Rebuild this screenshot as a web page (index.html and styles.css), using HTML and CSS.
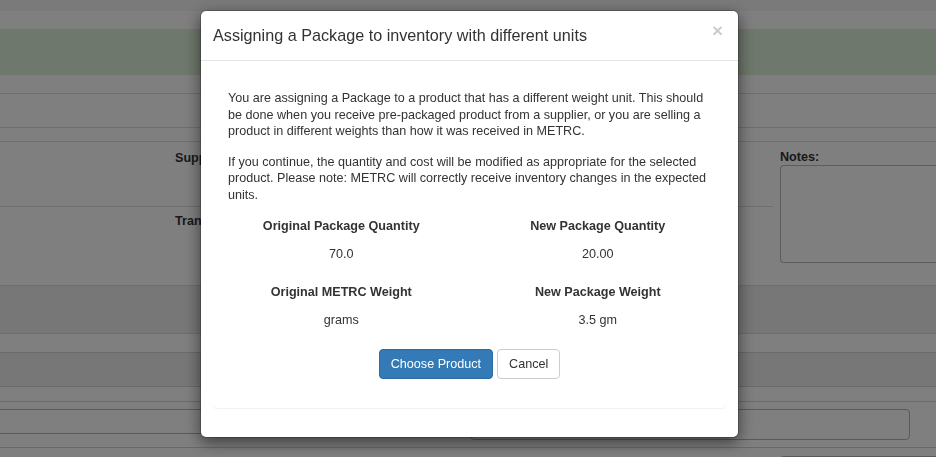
FILE: index.html
```html
<!DOCTYPE html>
<html lang="en">
<head>
<meta charset="utf-8">
<title>Assigning a Package</title>
<link rel="stylesheet" href="styles.css">
</head>
<body>
<div class="page">
  <div class="topbar"></div>
  <div class="spacer-a"></div>
  <div class="alert"></div>
  <div class="spacer-b"></div>
  <div class="band band-1"></div>
  <div class="band band-2"></div>
  <div class="form-area">
    <div class="form-left">
      <div class="form-row first"><span class="lbl">Supplier:</span></div>
      <div class="form-row"><span class="lbl">Transfer:</span></div>
    </div>
    <div class="form-right">
      <span class="lbl">Notes:</span>
      <div class="textarea"></div>
    </div>
  </div>
  <div class="band band-3"></div>
  <div class="band band-4"></div>
  <div class="band band-5"></div>
  <div class="band band-6"></div>
  <div class="input-row">
    <div class="input input-left"></div>
    <div class="input input-right"></div>
  </div>
  <div class="band band-7"></div>
  <div class="bottom-row"><div class="input input-bottom"></div></div>
</div>

<div class="backdrop"></div>

<div class="modal">
  <div class="modal-header">
    <h4 class="modal-title">Assigning a Package to inventory with different units</h4>
    <span class="close">&times;</span>
  </div>
  <div class="modal-body">
    <div class="panel">
      <p>You are assigning a Package to a product that has a different weight unit. This should be done when you receive pre-packaged product from a supplier, or you are selling a product in different weights than how it was received in METRC.</p>
      <p>If you continue, the quantity and cost will be modified as appropriate for the selected product. Please note: METRC will correctly receive inventory changes in the expected units.</p>
      <div class="stats">
        <div class="stat">
          <div class="stat-label">Original Package Quantity</div>
          <div class="stat-value">70.0</div>
        </div>
        <div class="stat">
          <div class="stat-label">New Package Quantity</div>
          <div class="stat-value">20.00</div>
        </div>
        <div class="stat">
          <div class="stat-label">Original METRC Weight</div>
          <div class="stat-value">grams</div>
        </div>
        <div class="stat">
          <div class="stat-label">New Package Weight</div>
          <div class="stat-value">3.5 gm</div>
        </div>
      </div>
      <div class="actions">
        <button class="btn btn-primary" type="button">Choose Product</button>
        <button class="btn btn-default" type="button">Cancel</button>
      </div>
    </div>
  </div>
</div>
</body>
</html>
```

FILE: styles.css
```css
* { box-sizing: border-box; }
html, body { margin: 0; padding: 0; }
body {
  font-family: "Liberation Sans", Arial, sans-serif;
  font-size: 12.6px;
  color: #333;
  background: #fff;
  width: 936px;
  height: 457px;
  overflow: hidden;
}

/* background page */
.page { width: 936px; }
.topbar { height: 11px; background: #f4f4f4; }
.spacer-a { height: 18px; }
.alert { height: 46px; background: #dff0d8; }
.spacer-b { height: 18px; }
.band { border-top: 1px solid #dcdcdc; }
.band-1 { height: 34px; }
.band-2 { height: 14px; background: #fefefe; }
.form-area {
  border-top: 1px solid #dcdcdc;
  height: 144px;
  display: flex;
}
.form-left { width: 773px; }
.form-row { height: 65px; padding: 9px 0 0 175px; }
.form-row.first { border-bottom: 1px solid #dcdcdc; }
.form-row + .form-row { height: 78px; padding-top: 7px; }
.lbl { font-weight: bold; font-size: 12.6px; color: #333; }
.form-right { padding: 8px 0 0 7px; flex: 1; }
.textarea {
  margin-top: 1px;
  height: 98px;
  border: 1px solid #bbb;
  border-right: none;
  border-radius: 4px 0 0 4px;
}
.band-3 { height: 49px; background: #eee; border-bottom: 1px solid #dcdcdc; }
.band-4 { height: 18px; border-top: none; }
.band-5 { height: 35px; background: #eee; border-top: 1px solid #d4d4d4; border-bottom: 1px solid #d4d4d4; }
.band-6 { height: 15px; border-top: none; border-bottom: 1px solid #d4d4d4; }
.input-row { height: 45px; padding-top: 7px; display: flex; }
.input {
  border: 1px solid #b4b4b4;
  border-radius: 4px;
}
.input-left { width: 480px; height: 25px; margin-left: -10px; border-left: none; border-radius: 0 4px 4px 0; }
.input-right { width: 440px; height: 31px; margin-left: 0; }
.band-7 { height: 9px; border-top: 1px solid #d0d0d0; }
.bottom-row { padding-left: 780px; }
.input-bottom { height: 20px; border-bottom: none; border-radius: 4px 0 0 0; }

/* overlay */
.backdrop {
  position: fixed;
  inset: 0;
  background: rgba(0, 0, 0, 0.5);
}

.modal {
  position: fixed;
  top: 10px;
  left: 200px;
  width: 539px;
  background: #fff;
  border-radius: 6px;
  border: 1px solid rgba(0, 0, 0, 0.2);
  box-shadow: 0 5px 15px rgba(0, 0, 0, 0.5);
  background-clip: padding-box;
}
.modal-header {
  position: relative;
  padding: 14px 15px 15px 12px;
  border-bottom: 1px solid #e5e5e5;
}
.modal-title {
  margin: 0;
  font-size: 16.2px;
  font-weight: normal;
  line-height: 20px;
  color: #333;
}
.close {
  position: absolute;
  right: 15px;
  top: 10px;
  font-size: 19px;
  font-weight: bold;
  line-height: 1;
  color: #000;
  opacity: 0.2;
}
.modal-body { padding: 14px 12px 29px; }
.panel {
  border-radius: 4px;
  box-shadow: 0 1px 1px rgba(0, 0, 0, 0.06);
  padding: 15px 15px 29px;
}
.panel p {
  margin: 0 0 14px;
  line-height: 16.5px;
  font-size: 12.6px;
}
.stats {
  display: grid;
  grid-template-columns: 1fr 1fr;
  margin: 15px -15px 0;
  row-gap: 22px;
}
.stat { text-align: center; }
.stat-label { font-weight: bold; font-size: 12.6px; line-height: 16px; color: #333; }
.stat-value { margin-top: 12px; line-height: 16px; font-size: 12.6px; }
.actions {
  display: flex;
  justify-content: center;
  gap: 4px;
  margin-top: 21px;
}
.btn {
  font-family: "Liberation Sans", Arial, sans-serif;
  font-size: 12.6px;
  line-height: 17px;
  padding: 5px 11px;
  border-radius: 4px;
  border: 1px solid transparent;
  height: 30px;
}
.btn-primary { background: #337ab7; border-color: #2e6da4; color: #fff; }
.btn-default { background: #fff; border-color: #ccc; color: #333; }
```
